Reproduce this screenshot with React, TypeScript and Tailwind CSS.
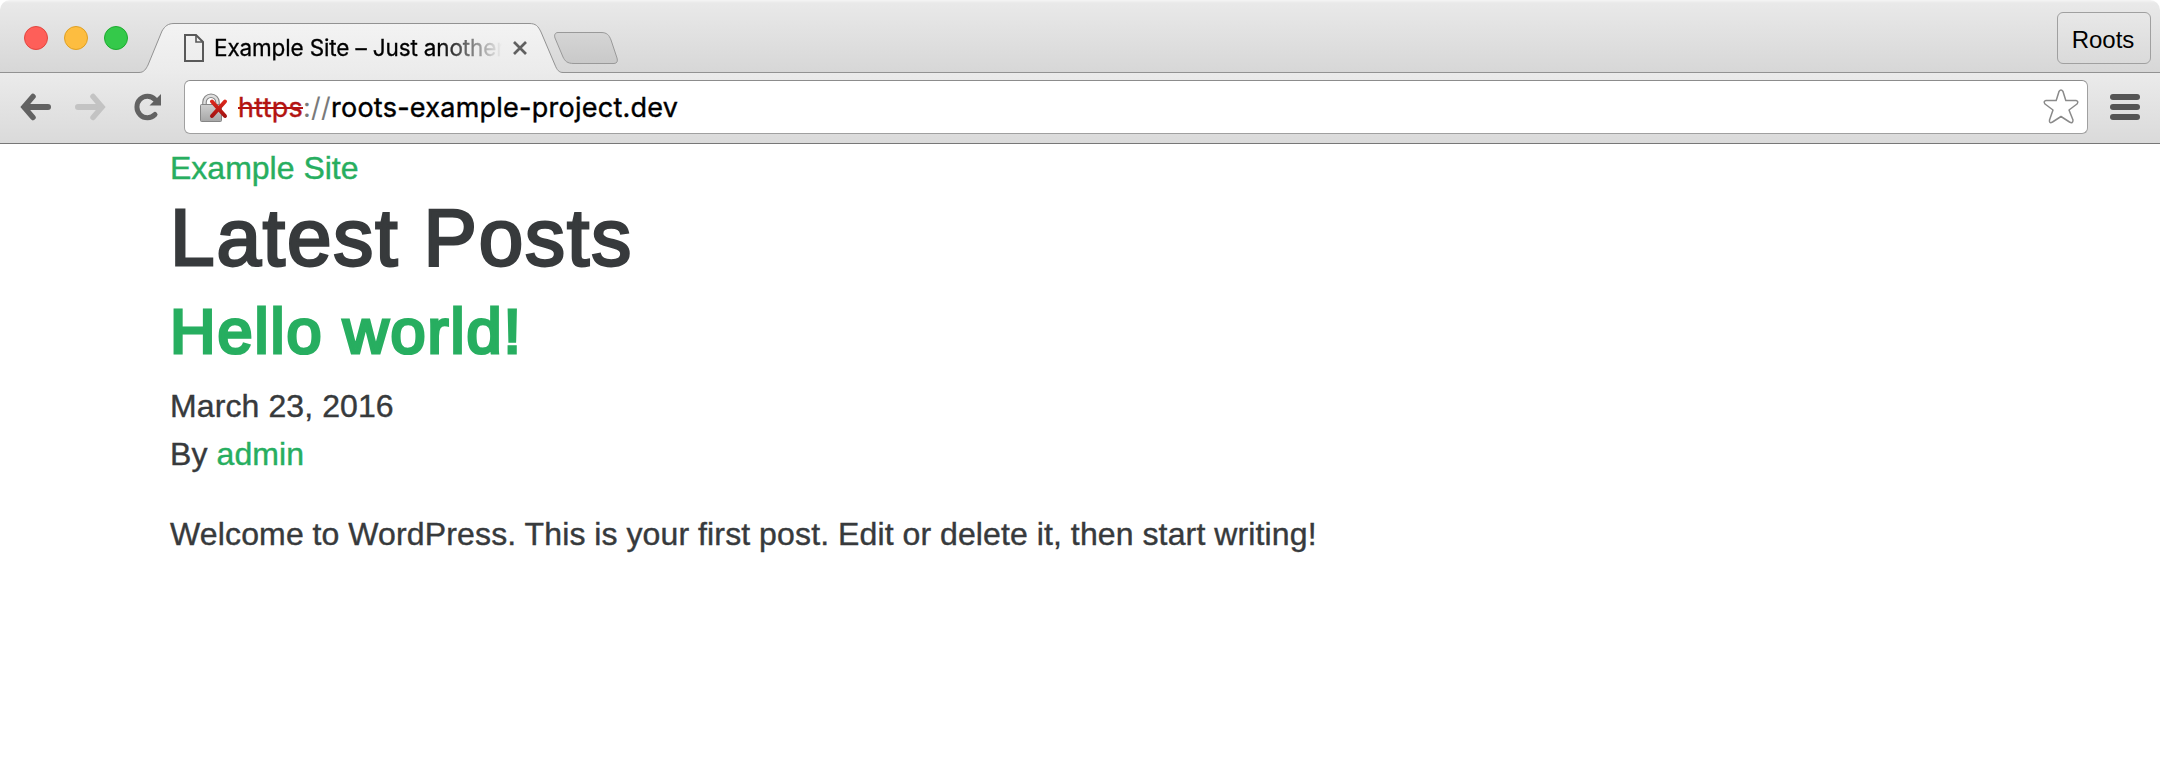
import React from 'react';

const sans = "font-['Liberation_Sans',Arial,sans-serif]";
const ui = "font-['Inter',sans-serif]";

function TrafficLights() {
  return (
    <div className="ml-6 mt-[26px] flex gap-4">
      <span className="size-6 rounded-full border border-[#e2463f] bg-[#fe5f59]" />
      <span className="size-6 rounded-full border border-[#dfa023] bg-[#fdbd40]" />
      <span className="size-6 rounded-full border border-[#1dab2f] bg-[#34c94a]" />
    </div>
  );
}

function Tab() {
  return (
    <div className="relative ml-2 h-[74px] w-[427px] shrink-0">
      <svg className="absolute inset-0" width="427" height="74" viewBox="0 0 427 74" fill="none">
        <defs>
          <linearGradient id="tab" x1="0" y1="23" x2="0" y2="74" gradientUnits="userSpaceOnUse">
            <stop stopColor="#f3f3f3" />
            <stop offset="1" stopColor="#ebebeb" />
          </linearGradient>
        </defs>
        <path d="M0 74V72.5H3C8 72.5 10 69 12 65L26 31C29 26 32 23.5 38 23.5H393C400 23.5 402 26 405 32L419 65C421 70 423 72.5 427 72.5V74Z" fill="url(#tab)" />
        <path d="M0 72.5H3C8 72.5 10 69 12 65L26 31C29 26 32 23.5 38 23.5H393C400 23.5 402 26 405 32L419 65C421 70 423 72.5 427 72.5" stroke="#929292" />
      </svg>
      <div className="relative flex items-start pl-12 pt-[33px]">
        <svg className="mt-px" width="20" height="28" viewBox="0 0 20 28" fill="none" stroke="#595959" strokeWidth="2">
          <path d="M1 1H12L19 8V27H1Z" />
          <path d="M12 1V8H19" strokeWidth="1.6" />
        </svg>
        <div
          className={`${ui} ml-[10px] w-[310px] whitespace-nowrap text-[22.5px] leading-[30px] tracking-[-0.14px] text-black [-webkit-text-stroke:0.3px_black] [mask-image:linear-gradient(to_right,black_225px,transparent_288px)]`}
        >
          Example Site – Just another
        </div>
        <svg className="-ml-[12px] mt-[7px]" width="16" height="16" viewBox="0 0 16 16" stroke="#606060" strokeWidth="2.700">
          <path d="M2 2L14 14M14 2L2 14" />
        </svg>
      </div>
    </div>
  );
}

function NewTab() {
  return (
    <svg className="-ml-[10px] mt-[31px] shrink-0" width="66" height="34" viewBox="0 0 66 34">
      <defs>
        <linearGradient id="newtab" x1="0" y1="0" x2="0" y2="1">
          <stop stopColor="#d5d5d5" />
          <stop offset="1" stopColor="#c9c9c9" />
        </linearGradient>
      </defs>
      <path d="M5 1.500H48C54 1.500 56 4 58 9L64 27C65 30 64 32.500 61 32.500H21C14 32.500 12 30 10 26L2 7C1 4 2 1.500 5 1.500Z" fill="url(#newtab)" stroke="#999" />
    </svg>
  );
}

function Toolbar() {
  return (
    <div className="flex h-[71px] items-start border-b border-[#777] bg-gradient-to-b from-[#ebebeb] to-[#dadada] pt-[7px]">
      <svg className="ml-5 mt-[13px]" width="32" height="28" viewBox="0 0 32 28" fill="none" stroke="#626262" strokeWidth="6" strokeLinecap="round" strokeLinejoin="miter">
        <path d="M5 14H28" />
        <path d="M13 3.500L4 14L13 24.500" strokeWidth="5.500" />
      </svg>
      <svg className="ml-[23px] mt-[13px]" width="32" height="28" viewBox="0 0 32 28" fill="none" stroke="#c3c3c3" strokeWidth="6" strokeLinecap="round">
        <path d="M3 14H26" />
        <path d="M18 3.500L27 14L18 24.500" strokeWidth="5.500" />
      </svg>
      <svg className="ml-[26px] mt-[13px]" width="30" height="28" viewBox="0 0 30 28" fill="none">
        <path d="M22 21.500A10.500 10.800 0 1 1 22 6.500" stroke="#626262" strokeWidth="5" strokeLinecap="round" />
        <path d="M28 1V12.500H16.500Z" fill="#626262" />
      </svg>
      <div className="ml-[21px] flex h-[54px] w-[1904px] items-start rounded-md border border-[#a0a0a0] border-t-[#8c8c8c] bg-white">
        <svg className="ml-[15px] mt-3" width="29" height="30" viewBox="0 0 29 30" fill="none">
          <defs>
            <linearGradient id="lock" x1="0" y1="0" x2="0" y2="1">
              <stop stopColor="#cfcfcf" />
              <stop offset="1" stopColor="#a6a6a6" />
            </linearGradient>
            <linearGradient id="cross" x1="0" y1="6" x2="0" y2="25" gradientUnits="userSpaceOnUse">
              <stop stopColor="#e32a1c" />
              <stop offset="1" stopColor="#9f1212" />
            </linearGradient>
          </defs>
          <path d="M4.500 12V9.200A6.500 6.500 0 0 1 17.500 9.200V12" stroke="#858585" strokeWidth="4.600" />
          <path d="M4.500 12V9.200A6.500 6.500 0 0 1 17.500 9.200V12" stroke="#dedede" strokeWidth="2.400" />
          <rect x="0.500" y="11.500" width="21" height="17" rx="1" fill="url(#lock)" stroke="#858585" />
          <path d="M12 8.500L25 23M25 8.500L12 23" stroke="url(#cross)" strokeWidth="4" strokeLinecap="round" />
        </svg>
        <div className={`${ui} ml-[9px] mt-[9px] whitespace-nowrap text-[27px] leading-9 tracking-[0.25px] text-black`}>
          <span className="text-[#b31412] line-through decoration-[2px] [-webkit-text-stroke:0.4px_#b31412]">https</span>
          <span className="text-[#7a7a7a]">://</span>
          <span className="[-webkit-text-stroke:0.4px_black]">roots-example-project.dev</span>
        </div>
        <svg className="ml-auto mr-[8px] mt-[8px]" width="36" height="35" viewBox="0 0 36 35" fill="none">
          <path
            d="M16 2.500Q18 -0.500 20 2.500L22.800 11.500H33Q36 12.300 34 15L26 21L30 31Q30 35 26.500 33L18 27.500L9.500 33Q6 35 6.500 31L10 21L2 15Q0 12.300 3 11.500H13.200Z"
            stroke="#8a8a8a"
            strokeWidth="1.500"
            strokeLinejoin="round"
          />
        </svg>
      </div>
      <div className="ml-[22px] mt-[14px] flex flex-col gap-1">
        <span className="h-[6px] w-[30px] rounded-full bg-[#555]" />
        <span className="h-[6px] w-[30px] rounded-full bg-[#555]" />
        <span className="h-[6px] w-[30px] rounded-full bg-[#555]" />
      </div>
    </div>
  );
}

export default function App() {
  return (
    <div className={`${sans} h-[766px] w-[2160px] overflow-hidden bg-white text-[#373a3c]`}>
      <header className="overflow-hidden rounded-t-[10px]">
        <div className="flex h-[73px] items-start bg-[linear-gradient(to_bottom,#f5f5f5_0,#e9e9e9_3px,#d7d7d7_72px,#929292_72px)]">
          <TrafficLights />
          <Tab />
          <NewTab />
          <div className="ml-auto mr-[9px] mt-3 flex h-[52px] w-[94px] items-center justify-center rounded-md border border-[#a0a0a0] bg-gradient-to-b from-[#e8e8e8] to-[#dadada] pr-[2px] pt-[3px] text-[24px] text-black">
            Roots
          </div>
        </div>
        <Toolbar />
      </header>
      <main className="px-[170px] text-[32px] leading-[48px] [-webkit-text-stroke:0.4px]">
        <div className="text-[#27ae60]">Example Site</div>
        <h1 className="mb-[12px] text-[80px] leading-[92px] tracking-[1.9px] [-webkit-text-stroke:2.8px_#373a3c]">Latest Posts</h1>
        <h2 className="mb-4 text-[63px] leading-[70.4px] tracking-[2px] text-[#27ae60] [-webkit-text-stroke:3.2px_#27ae60]">Hello world!</h2>
        <div className="tracking-[0.1px]">March 23, 2016</div>
        <div className="mb-8 tracking-[0.1px]">
          By <span className="text-[#27ae60]">admin</span>
        </div>
        <p className="tracking-[0.15px] [word-spacing:-0.3px]">Welcome to WordPress. This is your first post. Edit or delete it, then start writing!</p>
      </main>
    </div>
  );
}
